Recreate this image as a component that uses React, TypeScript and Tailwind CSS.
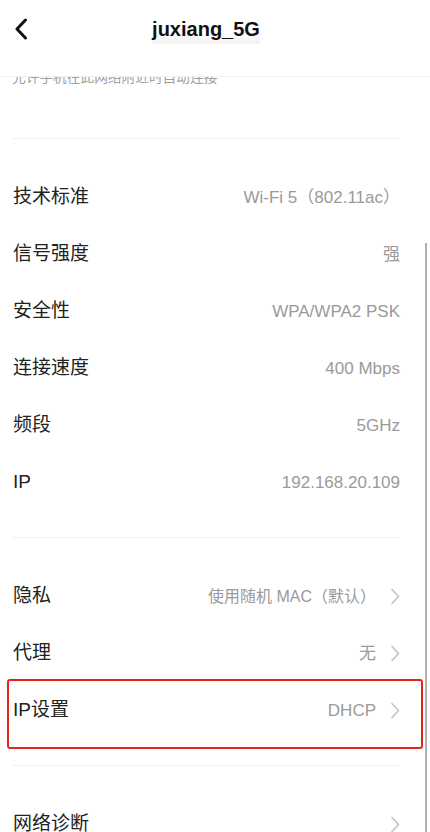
import React from "react";

const font = { fontFamily: '"Liberation Sans", "Noto Sans CJK SC", "Noto Sans", sans-serif' };

function Chevron() {
  return (
    <svg width="10" height="17" viewBox="0 0 10 17" className="ml-[14px]">
      <path d="M2 1.5 L8.5 8.5 L2 15.5" fill="none" stroke="#c4c4c4" strokeWidth="1.7" strokeLinecap="round" strokeLinejoin="round" />
    </svg>
  );
}

function Row({ label, value, chevron, small }: { label: string; value?: string; chevron?: boolean; small?: boolean }) {
  return (
    <div className="flex h-[57px] items-center justify-between pt-[4px]">
      <span className="text-[19px] text-[#222]">{label}</span>
      <div className="flex items-center">
        {value && <span className={small ? "text-[16px] text-[#9a9a9a]" : "text-[17px] text-[#9a9a9a]"}>{value}</span>}
        {chevron && <Chevron />}
      </div>
    </div>
  );
}

export default function App() {
  return (
    <div className="relative h-[832px] w-[430px] overflow-hidden bg-white" style={font}>
      <div className="relative z-10 flex h-[77px] items-start border-b border-[#f0f0f0] bg-white">
        <div className="flex h-[57px] w-full items-center px-[14px]">
          <svg width="14" height="22" viewBox="0 0 14 22">
            <path d="M11.5 2 L3 11 L11.5 20" fill="none" stroke="#111" strokeWidth="3" strokeLinecap="round" strokeLinejoin="round" />
          </svg>
          <div className="flex flex-1 justify-center pr-[32px]">
            <span className="bg-gradient-to-b from-white from-60% to-[#f1f1f1] text-[20px] font-bold text-[#111]" style={{ fontFamily: '"Liberation Sans", Arial, sans-serif' }}>
              juxiang_5G
            </span>
          </div>
        </div>
      </div>
      <div className="flex h-[8px] flex-col justify-end overflow-hidden px-[12px]">
        <span className="shrink-0 text-[13.7px] leading-[14px] text-[#a0a0a0]">允许手机在此网络附近时自动连接</span>
      </div>
      <div className="pl-[13px] pr-[30px]">
        <div className="mt-[53px] border-t border-[#f0f0f0]" />
        <div className="py-[28px]">
          <Row label="技术标准" value="Wi-Fi 5（802.11ac）" />
          <Row label="信号强度" value="强" />
          <Row label="安全性" value="WPA/WPA2 PSK" />
          <Row label="连接速度" value="400 Mbps" />
          <Row label="频段" value="5GHz" />
          <Row label="IP" value="192.168.20.109" />
        </div>
        <div className="border-t border-[#f0f0f0]" />
        <div className="py-[28px]">
          <Row label="隐私" value="使用随机 MAC（默认）" chevron small />
          <Row label="代理" value="无" chevron />
          <div className="relative">
            <Row label="IP设置" value="DHCP" chevron />
            <div className="pointer-events-none absolute left-[-6px] right-[-23px] top-[-1px] bottom-[-12px] rounded-[3px] border-2 border-[#e3261c]" />
          </div>
        </div>
        <div className="border-t border-[#f0f0f0]" />
        <div className="pt-[28px]">
          <Row label="网络诊断" chevron />
        </div>
      </div>
      <div className="absolute right-[3px] top-[243px] bottom-0 w-[2px] bg-[#b0b0b0]" />
    </div>
  );
}
